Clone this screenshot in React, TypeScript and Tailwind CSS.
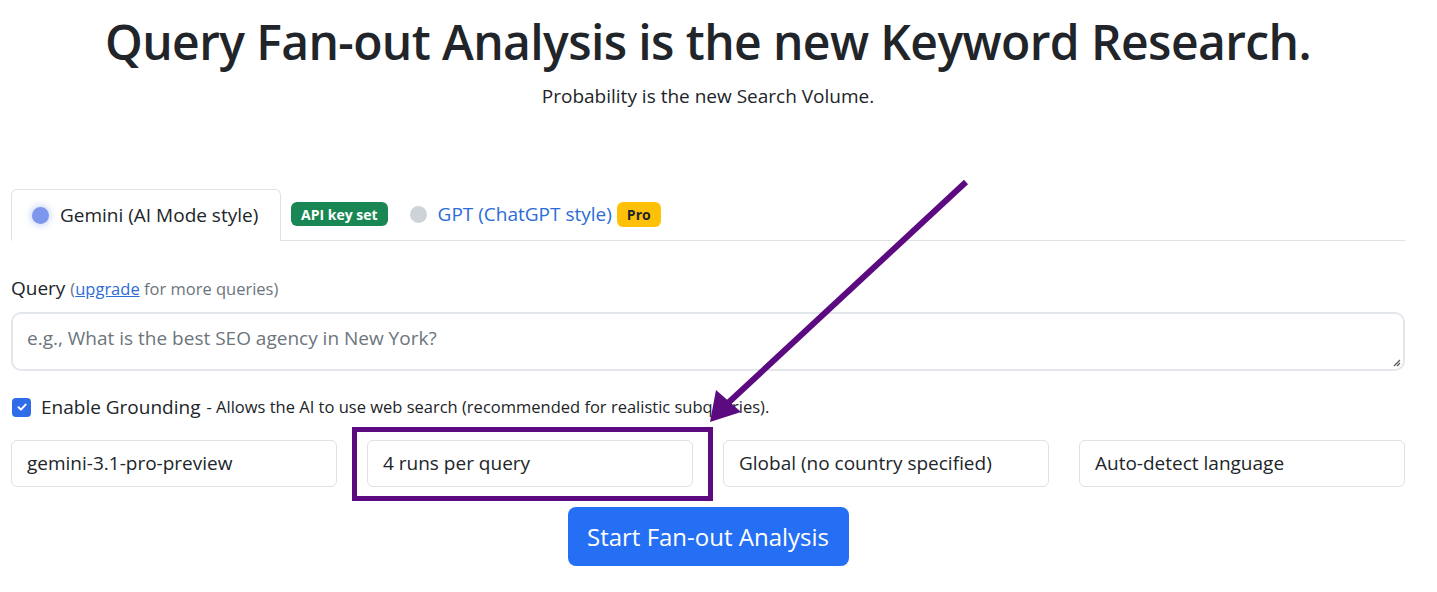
import React from 'react';

const font = { fontFamily: '"Open Sans", "Noto Sans", sans-serif' };

const Field: React.FC<{ label: string; highlight?: boolean }> = ({ label, highlight }) => (
  <div className="relative">
    <div className="h-[47px] rounded-[6px] border border-[#dee2e6] bg-white flex items-center px-[15px] text-[19px] text-[#212529]">
      {label}
    </div>
    {highlight && (
      <div className="absolute -left-[15px] -right-[20px] -top-[13px] -bottom-[14px] border-[5px] border-[#5c0a80] pointer-events-none" />
    )}
  </div>
);

const App: React.FC = () => {
  return (
    <div className="relative w-[1437px] h-[592px] bg-white overflow-hidden text-[#212529]" style={font}>
      <div className="w-[1394px] ml-[11px]">
        {/* Header */}
        <div className="text-center pt-[10px]">
          <h1 className="text-[48px] leading-[64px] font-semibold tracking-[-0.6px] text-[#212529]">
            Query Fan-out Analysis is the new Keyword Research.
          </h1>
          <p className="text-[19px] leading-[24px] mt-[10px] text-[#212529]">Probability is the new Search Volume.</p>
        </div>

        {/* Tabs */}
        <div className="mt-[81px] flex items-end border-b border-[#dee2e6] h-[52px]">
          <div className="-mb-px h-[52px] w-[270px] rounded-t-[6px] border border-[#dee2e6] border-b-white bg-white flex items-center pl-[20px] gap-[11px]">
            <span className="w-[17px] h-[17px] rounded-full bg-[#7c97ec] shadow-[0_0_6px_2px_rgba(124,151,236,0.35)]" />
            <span className="text-[19px]">Gemini (AI Mode style)</span>
          </div>
          <div className="h-[52px] flex items-center">
            <span className="ml-[10px] h-[24px] px-[10px] rounded-[6px] bg-[#198754] text-white text-[14px] font-bold flex items-center">API key set</span>
            <span className="ml-[22px] w-[17px] h-[17px] rounded-full bg-[#ced3d9]" />
            <span className="ml-[11px] text-[19px] text-[#2b6cd6]">GPT (ChatGPT style)</span>
            <span className="ml-[5px] h-[25px] px-[10px] rounded-[6px] bg-[#ffc107] text-[#212529] text-[14px] font-bold flex items-center">Pro</span>
          </div>
        </div>

        {/* Query */}
        <div className="mt-[35px] text-[19px] leading-[24px]">
          Query <span className="text-[16.5px] text-[#6c757d]">(<span className="text-[#2b6cd6] underline">upgrade</span> for more queries)</span>
        </div>
        <div className="relative mt-[11px] h-[59px] rounded-[10px] border-2 border-[#e3e6ea] bg-white px-[14px] pt-[10px] text-[19px] text-[#6c757d]">
          e.g., What is the best SEO agency in New York?
          <svg className="absolute right-[2px] bottom-[2px]" width="9" height="9" viewBox="0 0 9 9">
            <path d="M8 2 L2 8 M8 5 L5 8" stroke="#555" strokeWidth="1.2" />
          </svg>
        </div>

        {/* Grounding */}
        <div className="mt-[24px] flex items-center h-[24px]">
          <span className="w-[19px] h-[19px] ml-[1px] rounded-[4px] bg-[#2f6de8] flex items-center justify-center">
            <svg width="12" height="12" viewBox="0 0 12 12">
              <path d="M2.5 6.2 L5 8.6 L9.6 3.6" stroke="white" strokeWidth="2" fill="none" strokeLinecap="round" strokeLinejoin="round" />
            </svg>
          </span>
          <span className="ml-[10px] text-[19px]">Enable Grounding</span>
          <span className="ml-[6px] text-[16.5px]">- Allows the AI to use web search (recommended for realistic subqueries).</span>
        </div>

        {/* Settings */}
        <div className="mt-[21px] grid grid-cols-4 gap-x-[30px]">
          <Field label="gemini-3.1-pro-preview" />
          <Field label="4 runs per query" highlight />
          <Field label="Global (no country specified)" />
          <Field label="Auto-detect language" />
        </div>

        <div className="mt-[20px] flex justify-center">
          <button className="h-[59px] w-[281px] rounded-[8px] bg-[#256ff5] text-white text-[24px]">
            Start Fan-out Analysis
          </button>
        </div>
      </div>

      {/* Annotation arrow */}
      <svg className="absolute inset-0 pointer-events-none" width="1437" height="592" viewBox="0 0 1437 592">
        <line x1="966" y1="182" x2="728" y2="403" stroke="#5c0a80" strokeWidth="6" />
        <polygon points="716,390 741,412 710,422" fill="#5c0a80" />
      </svg>
    </div>
  );
};

export default App;
